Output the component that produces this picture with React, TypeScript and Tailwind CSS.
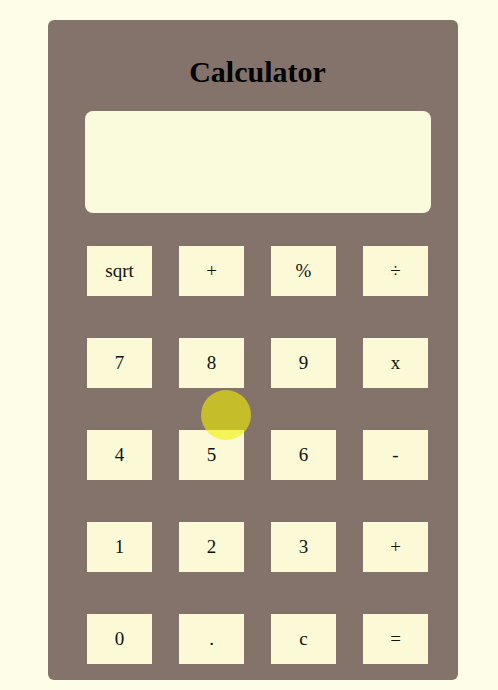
import React from "react";

const keys = ["sqrt", "+", "%", "÷", "7", "8", "9", "x", "4", "5", "6", "-", "1", "2", "3", "+", "0", ".", "c", "="];

export default function App() {
  return (
    <div className="w-[498px] h-[690px] bg-[#fdfde8] relative overflow-hidden" style={{ fontFamily: '"Liberation Serif", "Times New Roman", serif' }}>
      <div className="absolute left-[48px] top-[20px] w-[410px] h-[660px] rounded-[6px] bg-[#84736a] flex flex-col">
        <h1 className="pt-[35px] pl-[9px] text-center text-[30px] leading-[34px] font-bold text-black">Calculator</h1>
        <div className="mt-[22px] ml-[37px] w-[346px] h-[102px] rounded-[8px] bg-[#fafadc]"></div>
        <div className="mt-[33px] ml-[39px] grid grid-cols-[repeat(4,65px)] gap-x-[27px] gap-y-[42px]">
          {keys.map((k, i) => (
            <div key={i} className="h-[50px] bg-[#fbf9d6] flex items-center justify-center text-[19px] text-[#111]">
              {k}
            </div>
          ))}
        </div>
      </div>
      <div className="absolute left-[201px] top-[390px] w-[50px] h-[50px] rounded-full bg-[rgba(240,240,0,0.6)]"></div>
    </div>
  );
}
